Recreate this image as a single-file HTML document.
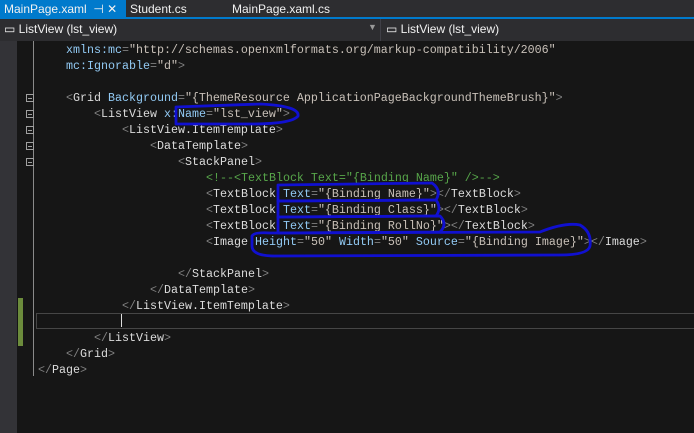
<!DOCTYPE html>
<html><head><meta charset="utf-8"><style>
body{margin:0;width:694px;height:433px;background:#161616;overflow:hidden;position:relative;font-family:"Liberation Sans",sans-serif}
.tabs{position:absolute;left:0;top:0;width:694px;height:18px;background:#2d2d30;font-size:12px;color:#f1f1f1}
.tabs div{position:absolute;top:0;height:18px;line-height:18px}
.blue{position:absolute;top:17px;left:0;width:694px;height:2px;background:#007acc}
.nav{position:absolute;top:19px;left:0;width:694px;height:22px;background:#2d2d30;color:#f1f1f1;font-size:12px}
.gut{position:absolute;top:41px;left:0;width:17px;height:392px;background:#333337}
.code{position:absolute;left:0;top:42px;font-family:"Liberation Mono",monospace;font-size:11.67px;color:#dcdcdc;white-space:pre}
.l{position:absolute;height:16px;line-height:16px}
.b{color:#808080}.a{color:#92caf4}.v{color:#c8c0b8}.c{color:#57a64a}
.fold{position:absolute;left:26px;width:8px;height:8px;border:1px solid #a0a0a0;box-sizing:border-box}
.fold:after{content:"";position:absolute;left:1px;top:3px;width:4px;height:1px;background:#a0a0a0}
</style></head><body>
<div class="tabs">
<div style="left:0;width:126px;background:#007acc;padding-left:4px;box-sizing:border-box">MainPage.xaml&nbsp;&nbsp;⊣&nbsp;✕</div>
<div style="left:130px">Student.cs</div>
<div style="left:232px">MainPage.xaml.cs</div>
</div>
<div class="blue"></div>
<div class="nav">
<div style="position:absolute;left:4px;top:3px">▭ ListView (lst_view)</div>
<div style="position:absolute;left:368px;top:3px;color:#999;font-size:9px">▼</div>
<div style="position:absolute;left:380px;top:0;width:1px;height:22px;background:#3f3f46"></div>
<div style="position:absolute;left:386px;top:3px">▭ ListView (lst_view)</div>
</div>
<div class="gut"></div>
<div style="position:absolute;left:18px;top:298px;width:5px;height:48px;background:#6c8c3c"></div>
<div style="position:absolute;left:33px;top:41px;width:1px;height:335px;background:#8a8a8a"></div>
<div class="fold" style="top:94px;background:#161616"></div>
<div class="fold" style="top:110px;background:#161616"></div>
<div class="fold" style="top:126px;background:#161616"></div>
<div class="fold" style="top:142px;background:#161616"></div>
<div class="fold" style="top:158px;background:#161616"></div>
<div style="position:absolute;left:36px;top:313px;width:660px;height:14px;border:1px solid #464646"></div>
<div style="position:absolute;left:121px;top:314px;width:1px;height:13px;background:#ddd"></div>
<div class="code">
<div class="l" style="left:66px;top:0"><span class="a">xmlns:mc</span><span class="b">=</span><span class="v">"http://schemas.openxmlformats.org/markup-compatibility/2006"</span></div>
<div class="l" style="left:66px;top:16px"><span class="a">mc:Ignorable</span><span class="b">=</span><span class="v">"d"</span><span class="b">&gt;</span></div>
<div class="l" style="left:66px;top:48px"><span class="b">&lt;</span>Grid <span class="a">Background</span><span class="b">=</span><span class="v">"{ThemeResource ApplicationPageBackgroundThemeBrush}"</span><span class="b">&gt;</span></div>
<div class="l" style="left:94px;top:64px"><span class="b">&lt;</span>ListView <span class="a">x:Name</span><span class="b">=</span><span class="v">"lst_view"</span><span class="b">&gt;</span></div>
<div class="l" style="left:122px;top:80px"><span class="b">&lt;</span>ListView.ItemTemplate<span class="b">&gt;</span></div>
<div class="l" style="left:150px;top:96px"><span class="b">&lt;</span>DataTemplate<span class="b">&gt;</span></div>
<div class="l" style="left:178px;top:112px"><span class="b">&lt;</span>StackPanel<span class="b">&gt;</span></div>
<div class="l c" style="left:206px;top:128px">&lt;!--&lt;TextBlock Text="{Binding Name}" /&gt;--&gt;</div>
<div class="l" style="left:206px;top:144px"><span class="b">&lt;</span>TextBlock <span class="a">Text</span><span class="b">=</span><span class="v">"{Binding Name}"</span><span class="b">&gt;&lt;/</span>TextBlock<span class="b">&gt;</span></div>
<div class="l" style="left:206px;top:160px"><span class="b">&lt;</span>TextBlock <span class="a">Text</span><span class="b">=</span><span class="v">"{Binding Class}"</span><span class="b">&gt;&lt;/</span>TextBlock<span class="b">&gt;</span></div>
<div class="l" style="left:206px;top:176px"><span class="b">&lt;</span>TextBlock <span class="a">Text</span><span class="b">=</span><span class="v">"{Binding RollNo}"</span><span class="b">&gt;&lt;/</span>TextBlock<span class="b">&gt;</span></div>
<div class="l" style="left:206px;top:192px"><span class="b">&lt;</span>Image <span class="a">Height</span><span class="b">=</span><span class="v">"50"</span> <span class="a">Width</span><span class="b">=</span><span class="v">"50"</span> <span class="a">Source</span><span class="b">=</span><span class="v">"{Binding Image}"</span><span class="b">&gt;&lt;/</span>Image<span class="b">&gt;</span></div>
<div class="l" style="left:178px;top:224px"><span class="b">&lt;/</span>StackPanel<span class="b">&gt;</span></div>
<div class="l" style="left:150px;top:240px"><span class="b">&lt;/</span>DataTemplate<span class="b">&gt;</span></div>
<div class="l" style="left:122px;top:256px"><span class="b">&lt;/</span>ListView.ItemTemplate<span class="b">&gt;</span></div>
<div class="l" style="left:94px;top:288px"><span class="b">&lt;/</span>ListView<span class="b">&gt;</span></div>
<div class="l" style="left:66px;top:304px"><span class="b">&lt;/</span>Grid<span class="b">&gt;</span></div>
<div class="l" style="left:38px;top:320px"><span class="b">&lt;/</span>Page<span class="b">&gt;</span></div>
</div>
<svg style="position:absolute;left:0;top:0" width="694" height="433" fill="none" stroke="#1010d0" stroke-width="2.8" stroke-linejoin="round">
<path d="M176 107 L260 104 Q300 106 298 116 Q292 124 250 124 L176 124 Z"/>
<path d="M278 185 L432 183 Q442 190 436 200 L278 201 Z"/>
<path d="M278 201 L436 200 Q442 208 436 216 L278 217 Z"/>
<path d="M278 217 L440 216 Q448 224 440 232 L278 233 Z"/>
<path d="M252 236 Q254 232 270 233 L540 232 Q565 222 580 225 Q592 232 590 246 Q588 255 560 255 L275 256 Q252 256 252 246 Z"/>
</svg>
</body></html>
